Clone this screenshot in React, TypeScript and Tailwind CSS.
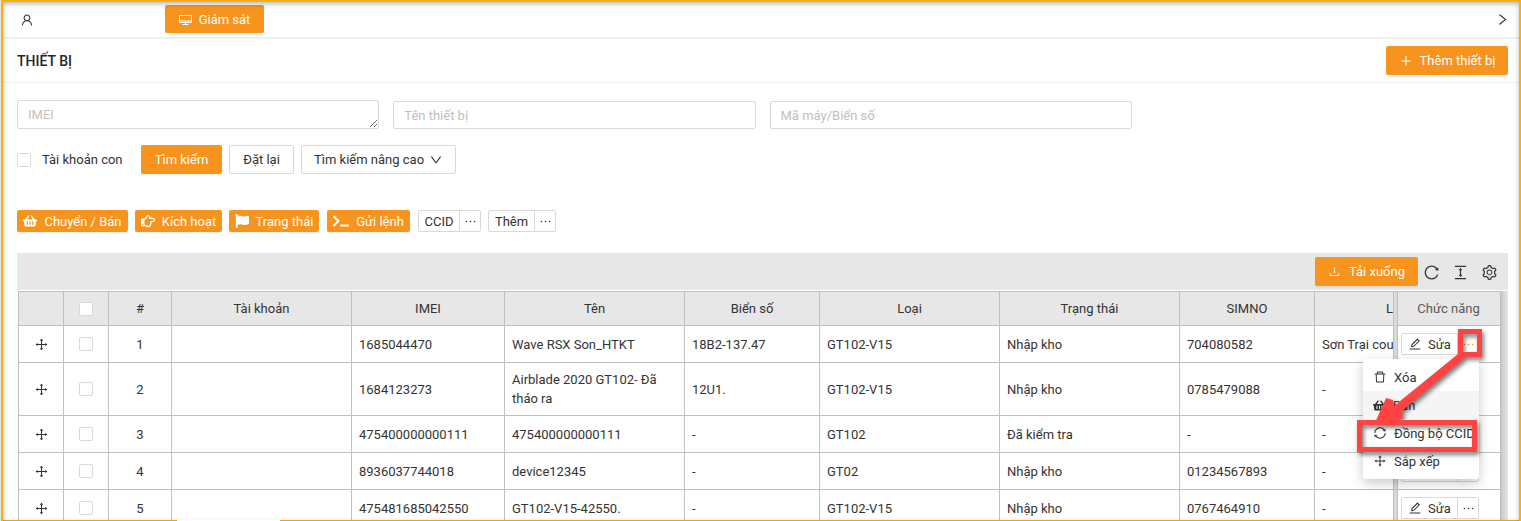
import type { ReactNode } from 'react';
import {
  AiOutlineUser,
  AiOutlineRight,
  AiOutlineDown,
  AiOutlinePlus,
  AiOutlineDownload,
  AiOutlineReload,
  AiOutlineColumnHeight,
  AiOutlineSetting,
  AiOutlineEdit,
  AiOutlineDelete,
  AiOutlineSync,
  AiOutlineDrag,
  AiOutlineEllipsis,
} from 'react-icons/ai';
import { FaShoppingBasket, FaRegHandPointRight, FaFlag, FaTerminal } from 'react-icons/fa';

type Device = {
  imei: string;
  name: string;
  plate: string;
  type: string;
  status: string;
  sim: string;
  contact: string;
};

const devices: Device[] = [
  { imei: '1685044470', name: 'Wave RSX Son_HTKT', plate: '18B2-137.47', type: 'GT102-V15', status: 'Nhập kho', sim: '704080582', contact: 'Sơn Trại coup' },
  { imei: '1684123273', name: 'Airblade 2020 GT102- Đã tháo ra', plate: '12U1.', type: 'GT102-V15', status: 'Nhập kho', sim: '0785479088', contact: '-' },
  { imei: '475400000000111', name: '475400000000111', plate: '-', type: 'GT102', status: 'Đã kiểm tra', sim: '-', contact: '-' },
  { imei: '8936037744018', name: 'device12345', plate: '-', type: 'GT02', status: 'Nhập kho', sim: '01234567893', contact: '-' },
  { imei: '475481685042550', name: 'GT102-V15-42550.', plate: '-', type: 'GT102-V15', status: 'Nhập kho', sim: '0767464910', contact: '-' },
];

const headers = ['#', 'Tài khoản', 'IMEI', 'Tên', 'Biển số', 'Loại', 'Trạng thái', 'SIMNO'];

const line = 'border-r border-b border-[#bfbfbf]';
const cell = `${line} px-[7px] py-[7px]`;
const fixedCell = 'border-r border-b border-l-[3px] border-[#bfbfbf] border-l-[#dadada] shadow-[inset_1px_0_0_#bfbfbf]';
const field = 'block w-full rounded-[2px] border border-[#d9d9d9] bg-white px-2.5 leading-[19px] outline-none placeholder:text-[#bfbfbf]';

function Checkbox({ label }: { label: string }) {
  return (
    <input
      type="checkbox"
      aria-label={label}
      className="block size-3.5 shrink-0 appearance-none rounded-[2px] border border-[#d9d9d9] bg-white"
    />
  );
}

function Primary({ children, className }: { children: ReactNode; className: string }) {
  return (
    <button
      type="button"
      className={`flex shrink-0 items-center justify-center rounded-[2px] bg-[#f7941d] whitespace-nowrap text-white shadow-[0_2px_0_rgba(0,0,0,0.04)] ${className}`}
    >
      {children}
    </button>
  );
}

function Split({ children, className, active = false }: { children: ReactNode; className: string; active?: boolean }) {
  return (
    <div className="flex h-[22px] shrink-0">
      <button type="button" className={`flex items-center justify-center rounded-l-[2px] border border-[#d9d9d9] bg-white ${className}`}>
        {children}
      </button>
      <button
        type="button"
        aria-label="Mở rộng"
        className={`-ml-px flex w-[22px] items-center justify-center rounded-r-[2px] border border-[#d9d9d9] bg-white ${active ? 'text-[#f7941d]' : ''}`}
      >
        <AiOutlineEllipsis size={15} className="shrink-0" />
      </button>
    </div>
  );
}

function Desktop() {
  return (
    <svg width="13" height="13" viewBox="0 0 13 13" fill="none" aria-hidden="true">
      <path d="M1 7h11v2H1z" fill="#fff" fillOpacity="0.5" />
      <path d="M.5 2.5h12v7H.5zM3.5 11.500h6M6.5 9.500v2" stroke="#fff" />
    </svg>
  );
}

function RowMenu() {
  const item = 'flex h-7 w-full items-center gap-[7px] px-2.5 text-left whitespace-nowrap';
  const icon = 'shrink-0';
  return (
    <div
      role="menu"
      className="absolute top-[26px] -left-[38px] z-10 w-[116px] rounded-[2px] bg-white py-1 shadow-[0_4px_12px_rgba(0,0,0,0.22)]"
    >
      <button type="button" role="menuitem" className={item}><AiOutlineDelete size={14} className={icon} />Xóa</button>
      <button type="button" role="menuitem" className={`${item} bg-[#f5f5f5]`}><FaShoppingBasket size={13} className={icon} />Bán</button>
      <button type="button" role="menuitem" className={item}><AiOutlineSync size={14} className={icon} />Đồng bộ CCID</button>
      <button type="button" role="menuitem" className={item}><AiOutlineDrag size={14} className={icon} />Sắp xếp</button>
    </div>
  );
}

function Callout() {
  return (
    <svg
      className="pointer-events-none absolute -top-2.5 -left-[50px] z-20 max-w-none drop-shadow-[2px_3px_2px_rgba(0,0,0,0.5)]"
      width="140"
      height="140"
      viewBox="0 0 140 140"
      aria-hidden="true"
    >
      <rect x="109.500" y="8.500" width="19" height="23" fill="none" stroke="#ff4343" strokeWidth="5" />
      <rect x="8.500" y="99.500" width="115" height="27" fill="none" stroke="#ff4343" strokeWidth="5" />
      <path d="M107 31L115 34L51 88L52 95L23 102L35 75L42 77L43 83Z" fill="#ff4343" />
    </svg>
  );
}

export default function App() {
  return (
    <div
      className="relative flex h-screen w-full overflow-hidden border-l border-[#e8e8e8] bg-white text-[13px] leading-[19px] text-[#333333]"
      style={{ fontFamily: 'Roboto, "Noto Sans", sans-serif' }}
    >
      <div className="flex min-w-0 flex-1 flex-col overflow-hidden border-2 border-b border-[#faad0e]">
        <header className="flex h-[37px] shrink-0 items-center border-b-2 border-[#f0f0f0] pr-[9px] pl-[17px]">
          <AiOutlineUser size={14} />
          <Primary className="ml-[131px] mb-px h-7 w-[99px] gap-[7px]"><Desktop />Giám sát</Primary>
          <button type="button" aria-label="Tiếp" className="ml-auto"><AiOutlineRight size={15} /></button>
        </header>

        <div className="flex h-11 shrink-0 items-center justify-between border-b border-[#f0f0f0] pr-[11px] pl-3.5">
          <h1 className="text-sm font-medium text-[#262626]">THIẾT BỊ</h1>
          <Primary className="h-[29px] w-[122px] gap-[7px]"><AiOutlinePlus size={14} />Thêm thiết bị</Primary>
        </div>

        <main className="pt-[17px] pr-[11px] pl-3.5">
          <form>
            <div className="grid grid-cols-4 items-end gap-[14px]">
              <textarea aria-label="IMEI" placeholder="IMEI" rows={1} className={`${field} h-[29px] py-1`} />
              <input aria-label="Tên thiết bị" placeholder="Tên thiết bị" className={`${field} h-7`} />
              <input aria-label="Mã máy/Biển số" placeholder="Mã máy/Biển số" className={`${field} h-7`} />
            </div>
            <div className="mt-4 flex items-center gap-[7px]">
              <label className="flex w-[117px] items-center gap-[11px] whitespace-nowrap">
                <Checkbox label="Tài khoản con" />
                Tài khoản con
              </label>
              <Primary className="h-[29px] w-[81px]">Tìm kiếm</Primary>
              <button type="reset" className="h-[29px] w-[65px] rounded-[2px] border border-[#d9d9d9]">Đặt lại</button>
              <button type="button" className="flex h-[29px] w-[155px] items-center justify-center gap-[5px] rounded-[2px] border border-[#d9d9d9]">
                Tìm kiếm nâng cao<AiOutlineDown size={14} />
              </button>
            </div>
          </form>

          <div className="mt-9 flex items-center gap-[7px]">
            <Primary className="h-[22px] w-[111px] gap-[7px]"><FaShoppingBasket size={14} />Chuyển / Bán</Primary>
            <Primary className="h-[22px] w-[87px] gap-[7px]"><FaRegHandPointRight size={14} />Kích hoạt</Primary>
            <Primary className="mr-px h-[22px] w-[90px] gap-[7px]"><FaFlag size={14} />Trạng thái</Primary>
            <Primary className="mr-px h-[22px] w-[83px] gap-[7px]"><FaTerminal size={16} />Gửi lệnh</Primary>
            <Split className="w-[42px]">CCID</Split>
            <Split className="w-[47px]">Thêm</Split>
          </div>

          <section className="mt-[21px]">
            <div className="flex h-[37px] items-center justify-end bg-[#e7e7e7] pr-2.5">
              <Primary className="h-[29px] w-[103px] gap-2"><AiOutlineDownload size={13} className="opacity-80" />Tải xuống</Primary>
              <div className="ml-[5px] flex items-center gap-3 pt-px">
                <button type="button" aria-label="Tải lại"><AiOutlineReload size={17} /></button>
                <button type="button" aria-label="Mật độ"><AiOutlineColumnHeight size={17} /></button>
                <button type="button" aria-label="Cài đặt"><AiOutlineSetting size={17} /></button>
              </div>
            </div>
            <div className="mt-px flex pl-px">
              <table className="w-full min-w-0 table-fixed border-separate border-spacing-0 border-t border-l border-[#bfbfbf]">
                <colgroup>
                  <col className="w-[45px]" />
                  <col className="w-[45px]" />
                  <col className="w-[63px]" />
                  <col className="w-[180px]" />
                  <col className="w-[153px]" />
                  <col className="w-[180px]" />
                  <col className="w-[135px]" />
                  <col className="w-[180px]" />
                  <col className="w-[180px]" />
                  <col className="w-[135px]" />
                  <col />
                  <col className="w-[107px]" />
                </colgroup>
                <thead className="bg-[#e7e7e7]">
                  <tr>
                    <th className={cell} />
                    <th className={line}>
                      <div className="flex justify-center"><Checkbox label="Chọn tất cả" /></div>
                    </th>
                    {headers.map((h) => (
                      <th key={h} scope="col" className={`${cell} font-normal`}>{h}</th>
                    ))}
                    <th scope="col" className={`${line} overflow-hidden text-right font-normal`}>L</th>
                    <th scope="col" className={`${fixedCell} font-normal text-[#595959]`}>Chức năng</th>
                  </tr>
                </thead>
                <tbody>
                  {devices.map((d, i) => (
                    <tr key={d.imei}>
                      <td className={line}>
                        <AiOutlineDrag size={15} className="mx-auto" />
                      </td>
                      <td className={line}>
                        <div className="flex justify-center"><Checkbox label={`Chọn ${d.imei}`} /></div>
                      </td>
                      <td className={`${cell} text-center`}>{i + 1}</td>
                      <td className={cell} />
                      <td className={cell}>{d.imei}</td>
                      <td className={cell}>{d.name}</td>
                      <td className={cell}>{d.plate}</td>
                      <td className={cell}>{d.type}</td>
                      <td className={cell}>{d.status}</td>
                      <td className={cell}>{d.sim}</td>
                      <td className={`${line} overflow-hidden pl-[7px] whitespace-nowrap`}>{d.contact}</td>
                      <td className={`${fixedCell} py-[7px] pl-1`}>
                        <div className="relative">
                          <Split className="w-[57px] gap-[6px]" active={i === 0}><AiOutlineEdit size={14} />Sửa</Split>
                          {i === 0 && <RowMenu />}
                          {i === 0 && <Callout />}
                        </div>
                      </td>
                    </tr>
                  ))}
                </tbody>
              </table>
              <div className="w-[7px] shrink-0 bg-linear-to-r from-[#c8c8c8] to-[#e7e7e7]" />
            </div>
          </section>
        </main>
      </div>
      <div className="pointer-events-none absolute inset-x-[2px] top-[2px] bottom-0 shadow-[inset_0_2px_5px_rgba(0,0,0,0.28)]" />
      <div className="absolute bottom-0 left-44 h-px w-[103px] bg-white" />
    </div>
  );
}
